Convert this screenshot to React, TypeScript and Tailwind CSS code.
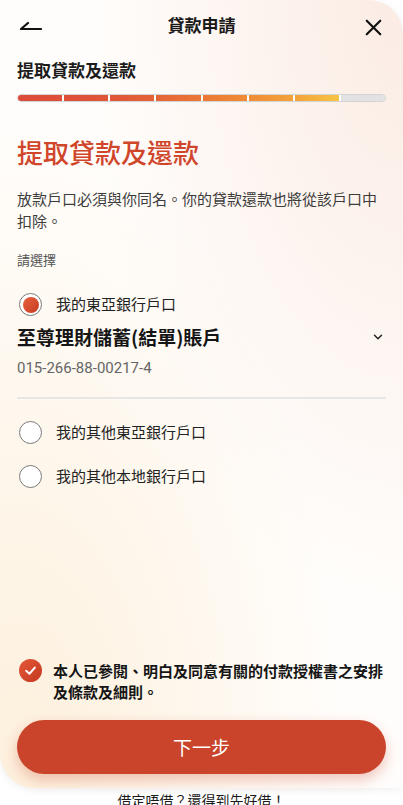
import React from 'react';
import { X, ChevronDown } from 'lucide-react';

const font = { fontFamily: '"Noto Sans CJK TC", "Noto Sans", sans-serif' };

const segments = [
  'bg-gradient-to-r from-[#dc4b39] to-[#de503a]',
  'bg-gradient-to-r from-[#de503a] to-[#e05639]',
  'bg-gradient-to-r from-[#e05639] to-[#e56337]',
  'bg-gradient-to-r from-[#e56337] to-[#eb7735]',
  'bg-gradient-to-r from-[#eb7735] to-[#f08c35]',
  'bg-gradient-to-r from-[#f08c35] to-[#f3a23a]',
  'bg-gradient-to-r from-[#f3a23a] to-[#f7c444]',
  'bg-[#e2e2e2]',
];

const Radio = ({ checked }: { checked?: boolean }) => (
  <div className="w-[23px] h-[23px] rounded-full border-[1.5px] border-[#7a7a7a] flex items-center justify-center shrink-0 bg-white">
    {checked && (
      <div className="w-[16px] h-[16px] rounded-full bg-gradient-to-br from-[#e8603e] to-[#c63b22]" />
    )}
  </div>
);

const App = () => {
  return (
    <div className="w-full h-[805px] overflow-hidden bg-white relative" style={font}>
      <div className="h-[788px] rounded-tr-[34px] rounded-bl-[34px] bg-[#fffdfb] bg-[image:radial-gradient(ellipse_at_100%_0%,#fbece4_0%,rgba(255,255,255,0)_55%),radial-gradient(ellipse_at_5%_100%,#fdf0dc_0%,rgba(255,255,255,0)_60%)] shadow-[0_2px_10px_rgba(0,0,0,0.06)] px-[17px] flex flex-col">
        {/* header */}
        <div className="h-[50px] flex items-center justify-between relative">
          <svg width="24" height="24" viewBox="0 0 24 24" className="ml-[1px] -mt-[1px]">
            <path d="M10 10 L3 16 L23 16" fill="none" stroke="#111" strokeWidth="2.2" strokeLinecap="round" strokeLinejoin="round" />
          </svg>
          <div className="absolute left-0 right-0 text-center text-[17px] font-semibold text-[#1a1a1a] pointer-events-none">
            貸款申請
          </div>
          <X className="w-[27px] h-[27px] text-[#111] -mr-[1px] mt-[4px]" strokeWidth={1.9} />
        </div>

        <div className="mt-[8px] text-[17px] font-bold text-[#1c1c1c] leading-[24px]">提取貸款及還款</div>

        <div className="mt-[12px] h-[8px] rounded-full border border-[#d4d4d4] overflow-hidden flex">
          {segments.map((c, i) => (
            <div key={i} className={`flex-1 h-full ${c} ${i < 7 ? 'border-r-2 border-white' : ''}`} />
          ))}
        </div>

        <div className="mt-[32px] text-[26px] font-medium text-[#d0462b] leading-[36px]">提取貸款及還款</div>

        <p className="mt-[18px] text-[15px] leading-[22px] text-[#3c3c3c]">
          放款戶口必須與你同名。你的貸款還款也將從該戶口中扣除。
        </p>

        <div className="mt-[19px] text-[13px] text-[#555] leading-[18px]">請選擇</div>

        <div className="mt-[24px] flex items-center gap-[14px] pl-[2px]">
          <Radio checked />
          <span className="text-[15px] text-[#222]">我的東亞銀行戶口</span>
        </div>

        <div className="mt-[7px] flex items-center justify-between">
          <span className="text-[19px] font-bold text-[#151515] leading-[28px]">至尊理財儲蓄(結單)賬戶</span>
          <ChevronDown className="w-[14px] h-[14px] text-[#222] mr-[1px]" strokeWidth={2.5} />
        </div>
        <div className="mt-[6px] text-[15px] text-[#666] leading-[22px]" style={{ fontFamily: 'Roboto, "Noto Sans CJK TC", sans-serif' }}>
          015-266-88-00217-4
        </div>

        <div className="mt-[18px] h-[2px] bg-[#e6e6e6]" />

        <div className="mt-[22px] flex items-center gap-[14px] pl-[2px]">
          <Radio />
          <span className="text-[15px] text-[#222]">我的其他東亞銀行戶口</span>
        </div>
        <div className="mt-[21px] flex items-center gap-[14px] pl-[2px]">
          <Radio />
          <span className="text-[15px] text-[#222]">我的其他本地銀行戶口</span>
        </div>

        <div className="flex-1" />

        <div className="flex items-start gap-[11px] pl-[2px]">
          <div className="w-[23px] h-[23px] rounded-full bg-gradient-to-br from-[#e4573a] to-[#c4391f] flex items-center justify-center shrink-0 mt-[-1px]">
            <svg width="13" height="13" viewBox="0 0 24 24">
              <path d="M4 12.5 L10 18 L20 6.5" fill="none" stroke="#fff" strokeWidth="3.6" strokeLinecap="round" strokeLinejoin="round" />
            </svg>
          </div>
          <p className="text-[15px] font-semibold text-[#151515] leading-[21px]">
            本人已參閱、明白及同意有關的付款授權書之安排及條款及細則。
          </p>
        </div>

        <button className="mt-[18px] mb-[14px] h-[54px] w-full rounded-full bg-[#c9442a] text-white text-[19px] shadow-[0_6px_14px_rgba(201,68,42,0.3)]">
          下一步
        </button>
      </div>
      <div className="text-center text-[14px] text-[#1a1a1a] leading-[20px] mt-[2px]">借定唔借？還得到先好借！</div>
    </div>
  );
};

export default App;
